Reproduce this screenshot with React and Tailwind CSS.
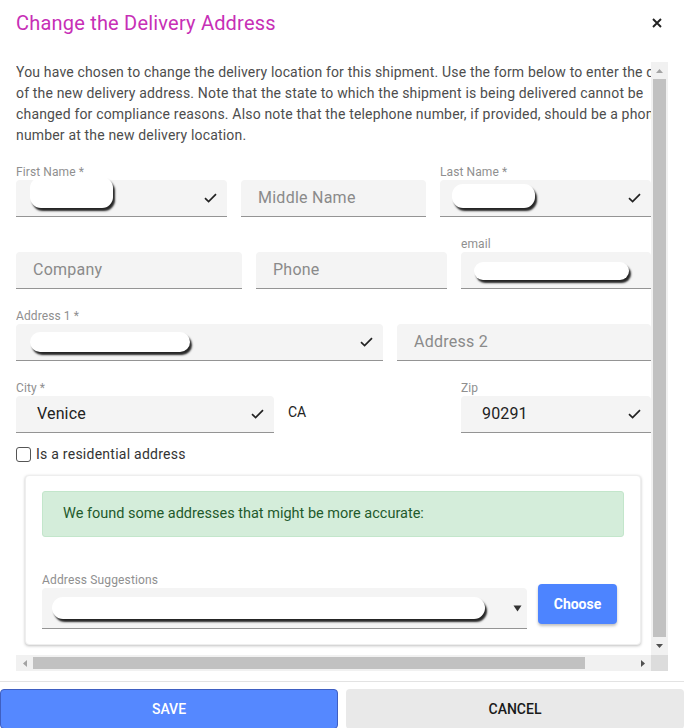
import React from "react";

const Check = () => (
  <svg width="13" height="10" viewBox="0 0 13 10" className="shrink-0">
    <path d="M1 5.2 L4.6 8.6 L12 1.2" fill="none" stroke="#222" strokeWidth="1.7" />
  </svg>
);

const Blob = ({ className }) => (
  <div className={"absolute bg-white rounded-[11px] shadow-[2px_3px_2px_rgba(0,0,0,0.85)] " + className} />
);

function Field({ label, width, placeholder, value, check, blob, children }) {
  return (
    <div className="flex flex-col shrink-0" style={{ width }}>
      <div className="h-[15px] text-[12px] leading-[15px] text-[#8f8f8f] whitespace-nowrap tracking-[0.1px]">{label || ""}</div>
      <div className="relative h-[37px] bg-[#f4f4f4] rounded-t-[4px] border-b border-[#949494] flex items-center justify-between pr-[10px]">
        {placeholder && <span className="pl-[17px] text-[16px] tracking-[0.25px] text-[#8a8a8a]">{placeholder}</span>}
        {value && <span className="pl-[21px] text-[16px] tracking-[0.15px] text-[#222]">{value}</span>}
        {!placeholder && !value && <span />}
        {check && <Check />}
        {blob}
        {children}
      </div>
    </div>
  );
}

export default function App() {
  return (
    <div className="w-[684px] h-[728px] bg-white overflow-hidden relative" style={{ fontFamily: "Roboto, 'Liberation Sans', sans-serif" }}>
      {/* Header */}
      <div className="h-[62px] px-4 pt-[9px] flex justify-between items-start">
        <div className="text-[20px] leading-[28px] tracking-[0.2px] text-[#c72fb6]">Change the Delivery Address</div>
        <svg width="10" height="10" viewBox="0 0 10 10" className="mt-[9px] mr-[6px]">
          <path d="M1 1 L9 9 M9 1 L1 9" stroke="#222" strokeWidth="1.9" />
        </svg>
      </div>

      {/* Scroll area */}
      <div className="ml-4 grid grid-cols-[635px_17px] grid-rows-[593px_16px] w-[652px] h-[609px]">
        <div className="overflow-hidden bg-white">
          <div className="w-[720px]">
            <p className="text-[14px] leading-[21px] tracking-[0.17px] text-[#4d4d4d] whitespace-nowrap">
              You have chosen to change the delivery location for this shipment. Use the form below to enter the details
              <br />
              of the new delivery address. Note that the state to which the shipment is being delivered cannot be
              <br />
              changed for compliance reasons. Also note that the telephone number, if provided, should be a phone
              <br />
              number at the new delivery location.
            </p>

            <div className="w-[635px]">
              <div className="mt-[19px] flex gap-[14px]">
                <Field label="First Name *" width={211} check blob={<Blob className="left-[14px] top-[-3px] w-[83px] h-[31px]" />} />
                <Field width={185} placeholder="Middle Name" />
                <Field label="Last Name *" width={211} check blob={<Blob className="left-[12px] top-[4px] w-[83px] h-[24px]" />} />
              </div>

              <div className="mt-[20px] flex gap-[14px]">
                <Field width={226} placeholder="Company" />
                <Field width={191} placeholder="Phone" />
                <Field label="email" width={190} blob={<Blob className="left-[13px] top-[10px] w-[155px] h-[18px]" />} />
              </div>

              <div className="mt-[20px] flex gap-[14px]">
                <Field label="Address 1 *" width={367} check blob={<Blob className="left-[14px] top-[8px] w-[160px] h-[20px]" />} />
                <Field width={254} placeholder="Address 2" />
              </div>

              <div className="mt-[20px] flex gap-[14px]">
                <Field label="City *" width={258} value="Venice" check />
                <div className="w-[159px] shrink-0 pt-[23px] text-[14px] leading-[16px] text-[#222]">CA</div>
                <Field label="Zip" width={190} value="90291" check />
              </div>

              <div className="mt-[14px] h-[15px] flex items-center gap-[5px]">
                <div className="w-[15px] h-[15px] border-[1.5px] border-[#555] rounded-[3px] bg-white" />
                <span className="text-[14px] tracking-[0.25px] text-[#333]">Is a residential address</span>
              </div>

              <div className="mt-[13px] ml-[9px] w-[616px] h-[170px] bg-white rounded-[4px] shadow-[0_1px_3px_rgba(0,0,0,0.25)] border border-[#eeeeee] pt-[15px] pl-[16px]">
                <div className="w-[582px] h-[46px] bg-[#d4edda] border border-[#c3e6cb] rounded-[3px] flex items-center pl-[20px] text-[14.5px] text-[#1f5a2c]">
                  We found some addresses that might be more accurate:
                </div>
                <div className="mt-[36px] flex">
                  <div className="w-[485px] flex flex-col">
                    <div className="h-[15px] text-[12px] leading-[15px] tracking-[0.15px] text-[#8f8f8f]">Address Suggestions</div>
                    <div className="relative h-[41px] bg-[#f4f4f4] rounded-t-[4px] border-b border-[#949494]">
                      <Blob className="left-[10px] top-[9px] w-[433px] h-[22px]" />
                      <svg width="9" height="7" viewBox="0 0 9 7" className="absolute left-[471px] top-[17px]">
                        <path d="M0.5 0.5 L8.5 0.5 L4.5 6.5 Z" fill="#333" />
                      </svg>
                    </div>
                  </div>
                  <div className="mt-[11px] ml-[11px] w-[79px] h-[40px] bg-[#4d84ff] rounded-[4px] shadow-[0_2px_3px_rgba(0,0,0,0.25)] flex items-center justify-center text-white text-[14px] font-bold">
                    Choose
                  </div>
                </div>
              </div>
            </div>
          </div>
        </div>

        {/* Vertical scrollbar */}
        <div className="bg-[#f1f1f1] flex flex-col">
          <div className="h-[17px] flex items-center justify-center">
            <svg width="7" height="4" viewBox="0 0 7 4"><path d="M0 4 L3.5 0 L7 4 Z" fill="#a3a3a3" /></svg>
          </div>
          <div className="h-[558px] mx-[2px] bg-[#c1c1c1]" />
          <div className="flex-1 flex items-center justify-center">
            <svg width="7" height="4" viewBox="0 0 7 4"><path d="M0 0 L7 0 L3.5 4 Z" fill="#505050" /></svg>
          </div>
        </div>

        {/* Horizontal scrollbar */}
        <div className="bg-[#f1f1f1] flex items-stretch">
          <div className="w-[17px] flex items-center justify-center">
            <svg width="4" height="7" viewBox="0 0 4 7"><path d="M4 0 L0 3.5 L4 7 Z" fill="#a3a3a3" /></svg>
          </div>
          <div className="w-[552px] my-[2px] bg-[#c1c1c1]" />
          <div className="flex-1 flex items-center justify-end pr-[6px]">
            <svg width="4" height="7" viewBox="0 0 4 7"><path d="M0 0 L4 3.5 L0 7 Z" fill="#505050" /></svg>
          </div>
        </div>
        <div className="bg-[#dcdcdc]" />
      </div>

      <div className="mt-[10px] h-px bg-[#e3e3e3]" />

      <div className="mt-[7px] flex gap-[8px]">
        <div className="w-[338px] h-[40px] bg-[#5588ff] border border-[#3f5fc2] rounded-[4px] flex items-center justify-center text-white text-[14px] font-medium">
          SAVE
        </div>
        <div className="w-[338px] h-[40px] bg-[#e9e9e9] rounded-[4px] flex items-center justify-center text-[#1a1a1a] text-[14px] font-medium">
          CANCEL
        </div>
      </div>
    </div>
  );
}
